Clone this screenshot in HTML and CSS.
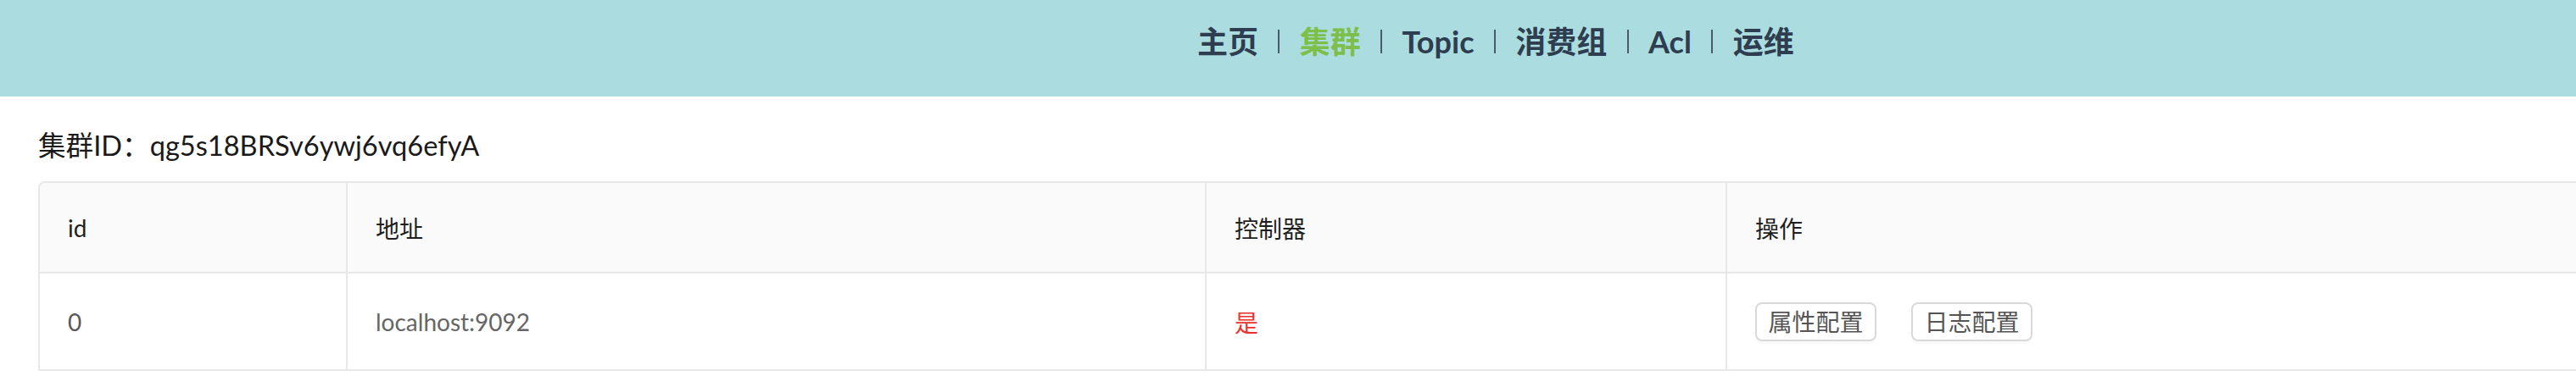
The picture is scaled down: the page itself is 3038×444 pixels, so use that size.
FILE: index.html
```html
<!DOCTYPE html>
<html lang="zh-CN">
<head>
<meta charset="utf-8">
<title>集群</title>
<link rel="stylesheet" href="styles.css">
</head>
<body>
<header class="topbar">
  <nav class="nav">
    <a class="nav-item">主页</a>
    <span class="sep"></span>
    <a class="nav-item active">集群</a>
    <span class="sep"></span>
    <a class="nav-item">Topic</a>
    <span class="sep"></span>
    <a class="nav-item">消费组</a>
    <span class="sep"></span>
    <a class="nav-item">Acl</a>
    <span class="sep"></span>
    <a class="nav-item">运维</a>
  </nav>
</header>
<main class="content">
  <h2 class="title">集群ID：qg5s18BRSv6ywj6vq6efyA</h2>
  <div class="table">
    <div class="row head">
      <div class="cell first">id</div>
      <div class="cell">地址</div>
      <div class="cell">控制器</div>
      <div class="cell last">操作</div>
    </div>
    <div class="row body">
      <div class="cell">0</div>
      <div class="cell muted">localhost:9092</div>
      <div class="cell red">是</div>
      <div class="cell last actions">
        <button class="btn">属性配置</button>
        <button class="btn">日志配置</button>
      </div>
    </div>
  </div>
</main>
</body>
</html>
```
FILE: styles.css
```css
html, body {
  margin: 0;
  padding: 0;
  background: #fff;
  overflow: hidden;
  font-family: Lato, "Noto Sans CJK SC", sans-serif;
}

.topbar {
  height: 114px;
  background: #abdde0;
  box-sizing: border-box;
  padding-top: 24px;
  padding-left: 1412px;
}

.nav {
  display: flex;
  align-items: center;
  height: 50px;
}

.nav-item {
  font-size: 36px;
  font-weight: 700;
  color: #2e3d4f;
  line-height: 50px;
  text-decoration: none;
}

.nav-item.active {
  color: #7dbf4a;
}

.sep {
  width: 2px;
  height: 28px;
  background: #4a5a6a;
  margin: 0 23.4px;
}

.content {
  padding-left: 45px;
}

.title {
  margin: 0;
  padding-top: 37px;
  font-size: 32.6px;
  font-weight: 400;
  line-height: 42px;
  color: #1a1a1a;
  margin-bottom: 21px;
}

.table {
  border-left: 2px solid #e8e8e8;
  border-top: 2px solid #e8e8e8;
  border-top-left-radius: 8px;
}

.row {
  display: grid;
  grid-template-columns: 363px 1013px 614px 1fr;
}

.cell {
  box-sizing: border-box;
  border-right: 2px solid #e8e8e8;
  border-bottom: 2px solid #e8e8e8;
  padding-left: 33px;
  display: flex;
  align-items: center;
  font-size: 28px;
}

.cell.last {
  border-right: none;
}

.head .cell {
  height: 107px;
  background: #fafafa;
  color: #1f1f1f;
}

.head .cell.first {
  border-top-left-radius: 8px;
}

.body .cell {
  height: 115px;
  color: #595959;
  font-weight: 400;
}

.body .cell.muted {
  color: #666;
}

.body .cell.red {
  color: #e8322f;
}

.actions {
  gap: 41px;
}

.btn {
  font-family: Lato, "Noto Sans CJK SC", sans-serif;
  font-size: 28px;
  font-weight: 400;
  color: #555;
  background: #fff;
  border: 2px solid #d9d9d9;
  border-radius: 8px;
  height: 46px;
  width: 143px;
  padding: 0;
  line-height: 42px;
  box-shadow: 0 3px 0 rgba(0, 0, 0, 0.02);
}
```
